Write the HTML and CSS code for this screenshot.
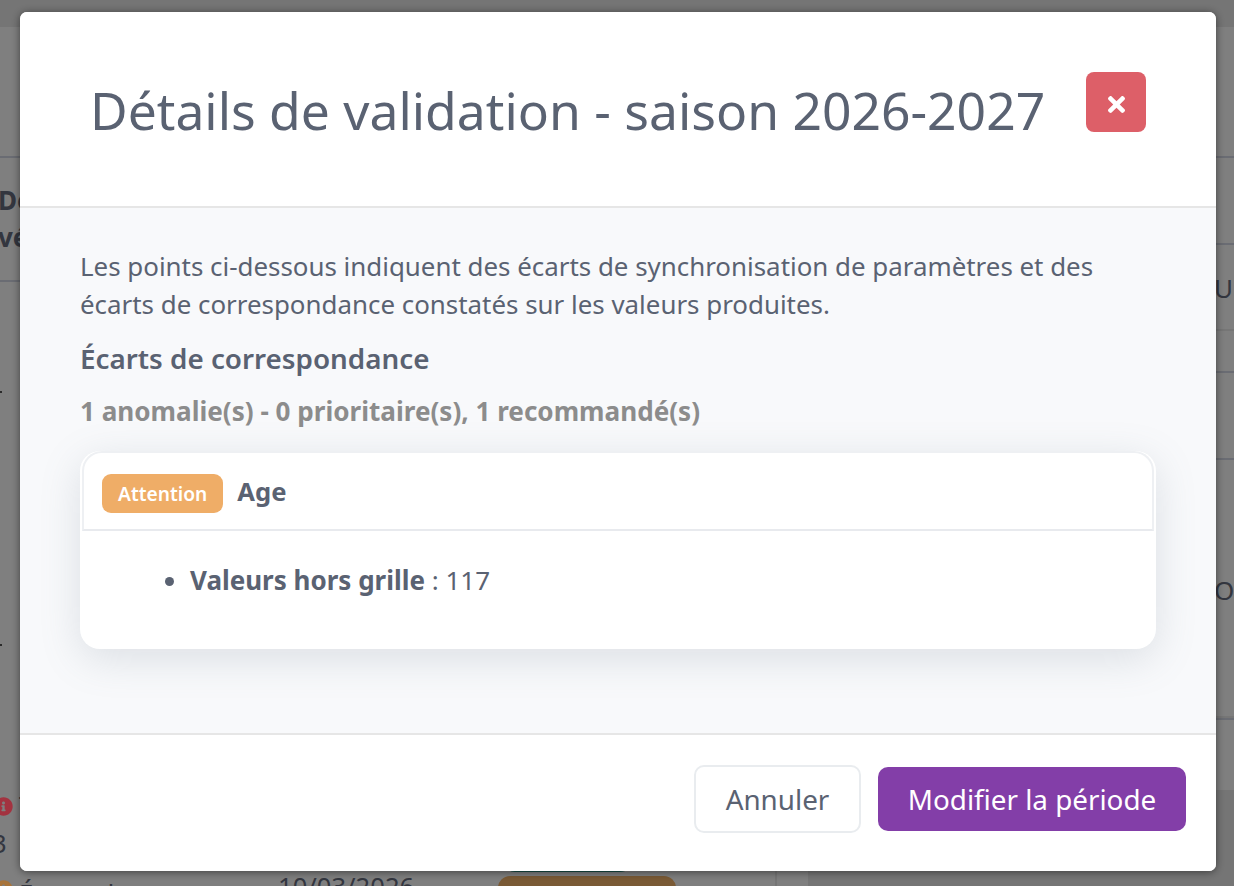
FILE: index.html
```html
<!DOCTYPE html>
<html lang="fr">
<head>
    <meta charset="UTF-8">
    <meta name="viewport" content="width=device-width, initial-scale=1.0">
    <title>Détails de validation</title>
    <link rel="stylesheet" href="styles.css">
</head>
<body>
    <div class="page">
        <div class="top-band"></div>
        <div class="columns">
            <section class="table-panel">
                <div class="table-spacer"></div>
                <div class="table-head">Détails<br>vérifiés</div>
                <div class="table-row tick-one"><span class="tick"></span></div>
                <div class="table-row tick-two"><span class="tick"></span></div>
                <div class="table-row issue-row">
                    <div class="issue-cell">
                        <div class="issue-title">
                            <svg class="info-icon info-red" viewBox="0 0 512 512"><path d="M256 8C119.043 8 8 119.083 8 256c0 136.997 111.043 248 248 248s248-111.003 248-248C504 119.083 392.957 8 256 8zm0 110c23.196 0 42 18.804 42 42s-18.804 42-42 42-42-18.804-42-42 18.804-42 42-42zm56 254c0 6.627-5.373 12-12 12h-88c-6.627 0-12-5.373-12-12v-24c0-6.627 5.373-12 12-12h12v-64h-12c-6.627 0-12-5.373-12-12v-24c0-6.627 5.373-12 12-12h64c6.627 0 12 5.373 12 12v100h12c6.627 0 12 5.373 12 12v24z"/></svg>
                            <span>Taux</span>
                        </div>
                        <div class="issue-count">3</div>
                    </div>
                    <div class="date-cell"></div>
                    <div class="pill-cell"><span class="pill pill-teal"></span></div>
                </div>
                <div class="table-row last-row">
                    <div class="issue-title last-title">
                        <svg class="info-icon info-orange" viewBox="0 0 512 512"><path d="M256 8C119.043 8 8 119.083 8 256c0 136.997 111.043 248 248 248s248-111.003 248-248C504 119.083 392.957 8 256 8zm0 110c23.196 0 42 18.804 42 42s-18.804 42-42 42-42-18.804-42-42 18.804-42 42-42zm56 254c0 6.627-5.373 12-12 12h-88c-6.627 0-12-5.373-12-12v-24c0-6.627 5.373-12 12-12h12v-64h-12c-6.627 0-12-5.373-12-12v-24c0-6.627 5.373-12 12-12h64c6.627 0 12 5.373 12 12v100h12c6.627 0 12 5.373 12 12v24z"/></svg>
                        <span>Écarts de</span>
                    </div>
                    <div class="date-cell last-date">10/03/2026</div>
                    <div class="pill-cell"><span class="pill pill-brown"></span></div>
                </div>
            </section>
            <div class="gutter"></div>
            <section class="side-panel">
                <div class="side-list">
                    <div class="side-row row-head"></div>
                    <div class="side-row row-a"></div>
                    <div class="side-row row-b"><span>UN</span></div>
                    <div class="side-row row-c"></div>
                    <div class="side-row row-d"></div>
                    <div class="side-row row-e"><span>ON</span></div>
                    <div class="side-row row-f"></div>
                </div>
            </section>
        </div>
    </div>

    <div class="overlay">
        <div class="modal">
            <header class="modal-header">
                <h2 class="modal-title">Détails de validation - saison 2026-2027</h2>
                <button class="close-btn" aria-label="Fermer">
                    <svg viewBox="0 0 352 512"><path d="M242.72 256l100.07-100.07c12.28-12.28 12.28-32.19 0-44.48l-22.24-22.24c-12.28-12.28-32.19-12.28-44.48 0L176 189.28 75.93 89.21c-12.28-12.28-32.19-12.28-44.48 0L9.21 111.45c-12.28 12.28-12.28 32.19 0 44.48L109.28 256 9.21 356.07c-12.28 12.28-12.28 32.19 0 44.48l22.24 22.24c12.28 12.28 32.2 12.28 44.48 0L176 322.72l100.07 100.07c12.28 12.28 32.2 12.28 44.48 0l22.24-22.24c12.28-12.28 12.28-32.19 0-44.48L242.72 256z"/></svg>
                </button>
            </header>
            <div class="modal-body">
                <p class="intro">Les points ci-dessous indiquent des écarts de synchronisation de paramètres et des écarts de correspondance constatés sur les valeurs produites.</p>
                <h3 class="section-title">Écarts de correspondance</h3>
                <p class="summary">1 anomalie(s) - 0 prioritaire(s), 1 recommandé(s)</p>
                <div class="card">
                    <div class="card-header">
                        <span class="badge">Attention</span>
                        <span class="card-title">Age</span>
                    </div>
                    <div class="card-body">
                        <ul class="card-list">
                            <li><strong>Valeurs hors grille</strong> : 117</li>
                        </ul>
                    </div>
                </div>
            </div>
            <footer class="modal-footer">
                <button class="btn btn-cancel">Annuler</button>
                <button class="btn btn-primary">Modifier la période</button>
            </footer>
        </div>
    </div>
</body>
</html>
```

FILE: styles.css
```css
* {
    box-sizing: border-box;
}
html, body {
    height: 100%;
}
body {
    margin: 0;
    font-family: "Noto Sans", Arial, sans-serif;
    color: #5a6272;
    overflow: hidden;
}

/* page behind the dialog */
.page {
    height: 886px;
    overflow: hidden;
    background-color: #ebebeb;
    color: #666c7e;
}
.top-band {
    height: 27px;
}
.columns {
    display: grid;
    grid-template-columns: 777px 31px 1fr;
    height: 859px;
}
.table-panel {
    background-color: #fff;
    border-right: 2px solid #ebebeb;
    overflow: hidden;
}
.gutter {
    background-color: #fff;
}
.table-spacer {
    height: 131px;
    border-bottom: 2px solid #d5d9e6;
}
.table-head {
    height: 124px;
    padding-top: 24px;
    margin-left: -2px;
    font-size: 26px;
    line-height: 37px;
    font-weight: 700;
    border-bottom: 2px solid #d5d9e6;
}
.tick {
    display: block;
    width: 2px;
    height: 2px;
    background-color: #555;
}
.tick-one {
    height: 253px;
    padding-top: 109px;
}
.tick-two {
    height: 256px;
    padding-top: 109px;
}
.issue-row, .last-row {
    display: grid;
    grid-template-columns: 278px 220px 1fr;
    align-items: start;
}
.issue-row {
    height: 80px;
}
.last-row {
    padding-top: 5px;
}
.issue-title {
    display: flex;
    align-items: center;
    gap: 6px;
    margin-left: -6px;
    font-size: 25.6px;
    line-height: 30px;
    white-space: nowrap;
}
.last-title {
    align-items: flex-start;
    padding-top: 3px;
}
.last-title .info-icon {
    margin-top: 1px;
}
.issue-count {
    margin-left: -8px;
    margin-top: 8px;
    font-size: 25.6px;
    line-height: 30px;
}
/* the status icons stay bright through the backdrop */
.info-icon {
    position: relative;
    z-index: 1;
    width: 19px;
    height: 19px;
    flex: none;
}
.info-red {
    fill: #a33340;
}
.info-orange {
    fill: #a8743a;
}
.date-cell {
    font-size: 25.6px;
    line-height: 30px;
}
.last-date {
    margin-top: -4px;
}
.pill {
    display: block;
    border-radius: 12px;
}
.pill-teal {
    width: 129px;
    height: 36px;
    margin: 45px 0 0 5px;
    background-color: #2f9b8c;
}
.pill-brown {
    width: 178px;
    height: 44px;
    background-color: #f4b46a;
}
.side-panel {
    background-color: #ebebeb;
}
.side-list {
    height: 763px;
    background-color: #fff;
}
.side-row {
    border-bottom: 2px solid #d5d9e6;
    padding-left: 406px;
    font-size: 26px;
    line-height: 36px;
    white-space: nowrap;
}
.row-head {
    height: 131px;
}
.row-a {
    height: 87px;
}
.row-b {
    height: 86px;
    padding-top: 25px;
    border-bottom-color: #ececec;
}
.row-c {
    height: 42px;
}
.row-d {
    height: 87px;
}
.row-e {
    height: 258px;
    padding-top: 112px;
    border-bottom-color: #ececec;
}

/* dialog */
.overlay {
    position: fixed;
    top: 0;
    left: 0;
    width: 100%;
    height: 100%;
    padding: 12px 18px 15px 20px;
    background-color: rgba(0, 0, 0, 0.5);
}
.modal {
    display: flex;
    flex-direction: column;
    height: 859px;
    background-color: #fff;
    border-radius: 7px;
    overflow: hidden;
    box-shadow: 0 1px 8px rgba(0, 0, 0, 0.5);
}
.modal-header {
    display: flex;
    align-items: flex-start;
    justify-content: space-between;
    height: 196px;
    padding: 60px 70px 0 70px;
    border-bottom: 2px solid #e6e6e6;
    background-color: #fff;
}
.modal-title {
    margin: 0;
    font-size: 51.6px;
    line-height: 76px;
    font-weight: 400;
    white-space: nowrap;
    color: #5a6272;
}
.close-btn {
    display: flex;
    align-items: center;
    justify-content: center;
    width: 60px;
    height: 60px;
    padding: 0;
    border: none;
    border-radius: 8px;
    background-color: #dd5f68;
}
.close-btn svg {
    width: 17px;
    height: 25px;
    margin-top: 5px;
    fill: #fff;
}
.modal-body {
    flex: 1;
    padding: 39px 60px 0;
    background-color: #f8f9fb;
}
.intro {
    margin: 0;
    font-size: 25.9px;
    line-height: 38px;
}
.section-title {
    margin: 16px 0 0;
    font-size: 27.8px;
    line-height: 38px;
    font-weight: 600;
}
.summary {
    margin: 17px 0 0;
    font-size: 26.1px;
    line-height: 34px;
    font-weight: 700;
    color: #8c8c8c;
}
.card {
    margin-top: 23px;
    height: 198px;
    background-color: #fff;
    border-radius: 20px;
    box-shadow: 0 10px 40px rgba(110, 125, 140, 0.2);
}
.card-header {
    display: flex;
    align-items: center;
    gap: 14px;
    height: 80px;
    padding: 0 18px;
    border: 2px solid #eef0f3;
    border-bottom-color: #e8eaee;
    border-radius: 20px 20px 0 0;
    margin: 0 2px;
}
.badge {
    padding: 0 16px;
    height: 39px;
    margin-top: 5px;
    font-size: 19.2px;
    line-height: 39px;
    font-weight: 600;
    color: #fff;
    background-color: #efad67;
    border-radius: 9px;
}
.card-title {
    font-size: 25.6px;
    line-height: 38px;
    font-weight: 700;
    margin-top: 2px;
}
.card-body {
    padding: 30px 0 0;
}
.card-list {
    margin: 0;
    padding: 0 0 0 110px;
    font-size: 26px;
    line-height: 38px;
}
.card-list strong {
    font-weight: 700;
}
.modal-footer {
    display: flex;
    align-items: center;
    justify-content: flex-end;
    gap: 17px;
    height: 138px;
    padding: 0 30px 8px 0;
    border-top: 2px solid #e6e6e6;
    background-color: #fff;
}
.btn {
    font-family: inherit;
    font-size: 27.8px;
    border-radius: 10px;
    cursor: pointer;
}
.btn-cancel {
    width: 167px;
    height: 68px;
    color: #5a6272;
    background-color: #fff;
    border: 2px solid #e9ecef;
}
.btn-primary {
    width: 308px;
    height: 64px;
    color: #fff;
    background-color: #833ea8;
    border: none;
}
```
